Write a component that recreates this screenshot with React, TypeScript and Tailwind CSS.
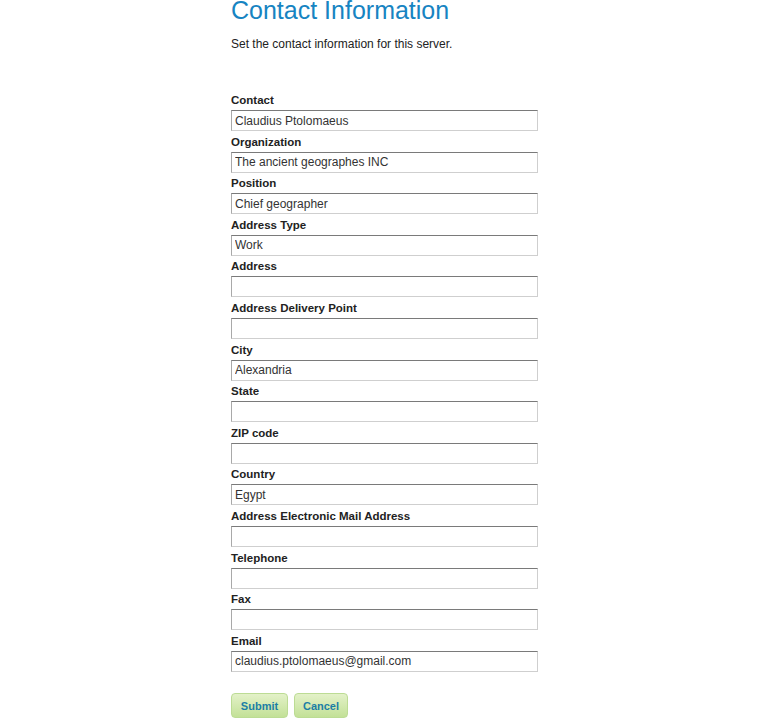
const fields: { label: string; value: string }[] = [
	{ label: "Contact", value: "Claudius Ptolomaeus" },
	{ label: "Organization", value: "The ancient geographes INC" },
	{ label: "Position", value: "Chief geographer" },
	{ label: "Address Type", value: "Work" },
	{ label: "Address", value: "" },
	{ label: "Address Delivery Point", value: "" },
	{ label: "City", value: "Alexandria" },
	{ label: "State", value: "" },
	{ label: "ZIP code", value: "" },
	{ label: "Country", value: "Egypt" },
	{ label: "Address Electronic Mail Address", value: "" },
	{ label: "Telephone", value: "" },
	{ label: "Fax", value: "" },
	{ label: "Email", value: "claudius.ptolomaeus@gmail.com" },
];

const Field = ({ label, value }: { label: string; value: string }) => (
	<div className="flex h-[41.6px] flex-col">
		<label className="text-[11.5px] font-bold leading-[13px] text-[#222]">{label}</label>
		<input
			type="text"
			defaultValue={value}
			className="mt-[3px] h-[21px] w-[307px] border border-t-[#7a7a7a] border-l-[#a9a9a9] border-r-[#cfcfcf] border-b-[#cfcfcf] bg-white px-[3px] text-[12px] text-[#333] outline-none"
		/>
	</div>
);

export default function App() {
	return (
		<div className="h-[718px] overflow-hidden bg-white font-['Liberation_Sans',Arial,sans-serif]">
			<div className="ml-[231px] flex flex-col">
				<h1 className="-mt-[4px] text-[25px] leading-[28px] font-normal text-[#1784c2]">Contact Information</h1>
				<p className="mt-[13px] text-[12px] leading-[14px] text-[#222]">
					Set the contact information for this server.
				</p>
				<form className="mt-[43px] flex flex-col">
					{fields.map((f) => (
						<Field key={f.label} label={f.label} value={f.value} />
					))}
					<div className="mt-[17px] flex gap-[6px]">
						<button
							type="button"
							className="h-[25px] w-[57px] rounded-[4px] border border-[#bcdc94] bg-gradient-to-b from-[#e3f1c8] to-[#c3e197] text-[11px] font-bold text-[#1b7ea6]"
						>
							Submit
						</button>
						<button
							type="button"
							className="h-[25px] w-[54px] rounded-[4px] border border-[#bcdc94] bg-gradient-to-b from-[#e3f1c8] to-[#c3e197] text-[11px] font-bold text-[#1b7ea6]"
						>
							Cancel
						</button>
					</div>
				</form>
			</div>
		</div>
	);
}
